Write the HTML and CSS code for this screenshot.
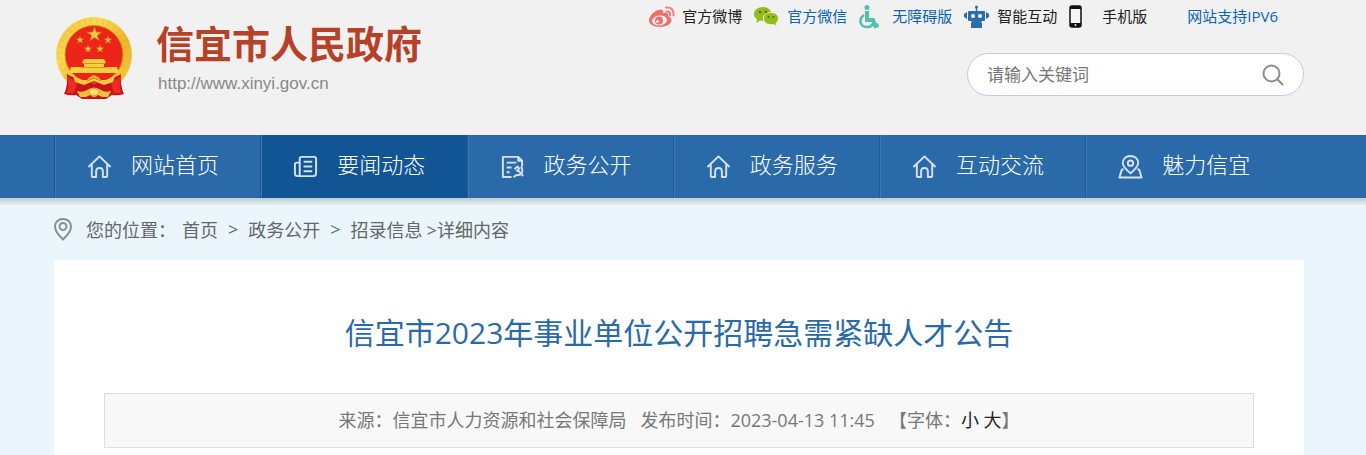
FILE: index.html
```
<!DOCTYPE html>
<html lang="zh-CN">
<head>
    <meta charset="UTF-8">
    <meta name="viewport" content="width=device-width, initial-scale=1">
    <title>信宜市2023年事业单位公开招聘急需紧缺人才公告</title>
    <link rel="stylesheet" href="styles.css">
</head>
<body>
    <!-- 公用图形 -->
    <svg class="defs" width="0" height="0" aria-hidden="true">
        <symbol id="home" viewBox="0 0 26 26">
            <path d="M1.5 13.5 13 2.5l11.500 11M5 11v12q0 1 1 1h3.500v-6q0-3.500 3.500-3.500t3.500 3.500v6H20q1 0 1-1V11"/>
        </symbol>
        <symbol id="star" viewBox="-10 -10 20 20">
            <path d="M0-10 2.400-3.200 9.500-3.100 3.800 1.300 5.900 8.100 0 4-5.900 8.100-3.800 1.300-9.500-3.100-2.400-3.200Z"/>
        </symbol>
    </svg>

    <div class="header">
        <div class="wrap headIn">
            <a class="logo" href="#">
                <svg class="emblem" viewBox="0 0 78 84" aria-hidden="true">
                    <defs>
                        <linearGradient id="gold" x1="0" y1="0" x2="1" y2="1">
                            <stop offset="0" stop-color="#f2b92d"/>
                            <stop offset=".3" stop-color="#fadb55"/>
                            <stop offset=".6" stop-color="#eeb52c"/>
                            <stop offset="1" stop-color="#f6cf45"/>
                        </linearGradient>
                    </defs>
                    <circle cx="38" cy="39" r="38" fill="url(#gold)"/>
                    <circle cx="38" cy="39" r="34" fill="none" stroke="#dfa226" stroke-width="5" stroke-dasharray="2 4" opacity=".2"/>
                    <circle cx="38" cy="38.500" r="29" fill="#ed2418" stroke="#d88d1c"/>
                    <g fill="#f4c747" stroke="#c87a16" stroke-width="1">
                        <use href="#star" x="31" y="11" width="15" height="15"/>
                        <use href="#star" x="20" y="20" width="8" height="8"/>
                        <use href="#star" x="48" y="20" width="8" height="8"/>
                        <use href="#star" x="28" y="29" width="8" height="8"/>
                        <use href="#star" x="40" y="29" width="8" height="8"/>
                    </g>
                    <path fill="#f9cf42" d="M28 43h20l2 4h-2v4h13l2 6H13l2-6h13v-4h-2z"/>
                    <path stroke="#dc8f20" d="M27 47.500h22M25 51.500h26"/>
                    <path fill="#c9141b" d="M11 58q9 6 17 5l10 5 10-5q8 1 17-5-1 12 3 20-6 2-12 1l-6 4H26l-6-4q-6 1-12-1 4-8 3-20z"/>
                    <path fill="#ef2a26" d="m12 61 9 5q-1 8-4 11l-6 0q2-7 1-16zm52 0-9 5q1 8 4 11l6 0q-2-7-1-16z"/>
                    <path fill="#f6ca3d" d="M16 57q7 8 15 7l3-3 4-2 4 2 3 3q8 1 15-7l-3 9-9 3-10-4-10 4-9-3z"/>
                    <path fill="none" stroke="#d08a1e" d="m31 65 7-3 7 3M35 61v3m3-5v4m3-3v4"/>
                    <path fill="#efc23c" d="M21 75q6 2 10-1 7-5 14 0 4 3 10 1l-3 6-6 0-4-2q-4 4-8 0l-4 2-6 0z"/>
                    <ellipse cx="38" cy="76" rx="5" ry="3.500" fill="#fae27a" stroke="#dc9c2c"/>
                </svg>
                <span class="logoText">
                    <span class="siteName">信宜市人民政府</span>
                    <span class="siteUrl">http://www.xinyi.gov.cn</span>
                </span>
            </a>
            <div class="headRight">
                <ul class="topLinks">
                    <li><a href="#">
                        <svg width="26" height="22" viewBox="0 0 26 22" aria-hidden="true">
                            <path fill="#ee6e6c" d="M10 4c3-1 5 0 4 3 4-1 6 0 5 3 8 4 1 11-8 11C4 21 0 18 0 14.500 0 10 6 4 10 4z"/>
                            <ellipse cx="10.500" cy="14.500" rx="7.500" ry="5" fill="#f6f1f1" transform="rotate(-8 10.500 14.500)"/>
                            <circle cx="10" cy="14.500" r="4" fill="#ee6e6c"/>
                            <circle cx="8.500" cy="15.500" r="1.300" fill="#fff"/>
                            <path fill="none" stroke="#ee7e7b" stroke-width="2" stroke-linecap="round" d="M17 1.500q8-1 7.500 8M17.500 5.500q4-.5 3.500 4"/>
                        </svg><span>官方微博</span></a></li>
                    <li><a class="blue" href="#">
                        <svg width="25" height="20" viewBox="0 0 25 20" aria-hidden="true">
                            <path fill="#94bd18" d="M9 0c5 0 8.500 3 8.500 7S14 14 9 14l-3-.5L2.500 16l.5-4C1 11 0 9 0 7c0-4 4-7 9-7z"/>
                            <path fill="#94bd18" stroke="#f1f1f1" d="M17 5.500c4.500 0 7.500 2.700 7.500 6 0 2.200-1 3.700-2.500 4.800l.5 3.200-3-2c-6 1-10-2-10-6s3-6 7.500-6z"/>
                            <g fill="#4b7209"><circle cx="6" cy="5" r="1.300"/><circle cx="12" cy="5" r="1.300"/><circle cx="14.500" cy="10" r="1"/><circle cx="19.500" cy="10" r="1"/></g>
                        </svg><span>官方微信</span></a></li>
                    <li><a class="blue" href="#">
                        <svg width="20" height="24" viewBox="0 0 20 24" fill="none" stroke="#54bfad" stroke-width="2.500" aria-hidden="true">
                            <circle cx="8" cy="2.500" r="2.500" fill="#54bfad" stroke="none"/>
                            <path d="M8 6v9h6l2.500 6 3-1" stroke-width="4"/>
                            <path d="M5 10c-6 4-4 12 3 12 4 0 6-2 7-5"/>
                        </svg><span>无障碍版</span></a></li>
                    <li><a href="#">
                        <svg width="25" height="24" viewBox="0 0 25 24" fill="#2c6dae" aria-hidden="true">
                            <circle cx="12.500" cy="2" r="1.500"/>
                            <path d="M11.800 2h1.400v4H20q1 0 1 1v8q0 1-1 1h-2.500v2H18v5H7v-5h.5v-2H5q-1 0-1-1V7q0-1 1-1h6.800zM0 9l3-2v7l-3-2zm25 0-3-2v7l3-2z"/>
                            <circle cx="9" cy="11" r="2" fill="#fff"/><circle cx="16" cy="11" r="2" fill="#fff"/>
                        </svg><span>智能互动</span></a></li>
                    <li><a href="#">
                        <svg width="13" height="23" viewBox="0 0 13 23" aria-hidden="true">
                            <rect x="1" y="1" width="11" height="21" rx="2" fill="#f4f4f4" stroke="#111" stroke-width="1.500"/>
                            <path fill="#111" d="M1 1h11v3H1zM1 18h11v4H1z"/>
                            <circle cx="6.500" cy="20" r="1" fill="#eee"/>
                        </svg><span>手机版</span></a></li>
                    <li class="ipv6"><a class="blue" href="#">网站支持IPV6</a></li>
                </ul>
                <form class="search">
                    <input type="text" placeholder="请输入关键词" aria-label="请输入关键词">
                    <button type="button" aria-label="搜索">
                        <svg width="22" height="22" viewBox="0 0 22 22" fill="none" stroke="#8c8c8c" stroke-width="2" aria-hidden="true">
                            <circle cx="9.500" cy="9.500" r="8"/><path d="m15 15 6 6"/>
                        </svg>
                    </button>
                </form>
            </div>
        </div>
    </div>

    <div class="nav">
        <ul class="wrap navList">
            <li><a href="#"><svg class="navIcon" aria-hidden="true"><use href="#home"/></svg><span>网站首页</span></a></li>
            <li><a class="on" href="#">
                <svg class="navIcon" viewBox="0 0 26 26" aria-hidden="true">
                    <path d="M7 20V5q0-2 2-2h13q2 0 2 2v15q0 3-3 3H5q-3 0-3-3V11q0-2 2-2h3v12q0 2-2 2M11 8h9M11 13h9M11 18h9"/>
                </svg><span>要闻动态</span></a></li>
            <li><a href="#">
                <svg class="navIcon" viewBox="0 0 26 26" aria-hidden="true">
                    <path d="M12 24H3V3h16l4 4v6M19 3v4h4M7 9h10M7 14h5M7 19h3M15 16l3-3 2 2-3 3M18 16l6 7M22 13q4 9-5 9l-3 2"/>
                </svg><span>政务公开</span></a></li>
            <li><a href="#"><svg class="navIcon" aria-hidden="true"><use href="#home"/></svg><span>政务服务</span></a></li>
            <li><a href="#"><svg class="navIcon" aria-hidden="true"><use href="#home"/></svg><span>互动交流</span></a></li>
            <li><a href="#">
                <svg class="navIcon" viewBox="0 0 26 26" aria-hidden="true">
                    <path d="M13 20Q5 13 5 9.500C5 5 8.500 2 13 2s8 3 8 7.500Q21 13 13 20zM6 16H4L1.500 24.500h23L22 16h-2"/>
                    <circle cx="13" cy="9.500" r="2.800"/>
                </svg><span>魅力信宜</span></a></li>
        </ul>
    </div>

    <div class="main">
        <div class="wrap">
            <div class="position">
                <svg width="18" height="23" viewBox="0 0 18 23" fill="none" stroke="#8a8f92" stroke-width="2" aria-hidden="true">
                    <path d="M9 21.500Q1 14 1 8.500C1 4 4.500 1 9 1s8 3 8 7.500Q17 14 9 21.500z"/>
                    <circle cx="9" cy="8.500" r="3.500"/>
                </svg>
                <span class="label">您的位置：</span>
                <a href="#">首页</a><span class="gt">&gt;</span><a href="#">政务公开</a><span class="gt">&gt;</span><a href="#">招录信息</a>
                <span class="last">&gt;详细内容</span>
            </div>
            <div class="article">
                <h1>信宜市2023年事业单位公开招聘急需紧缺人才公告</h1>
                <div class="info">
                    <span>来源：信宜市人力资源和社会保障局</span>
                    <span>发布时间：2023-04-13 11:45</span>
                    <span>【字体：<button type="button">小</button> <button type="button">大</button>】</span>
                </div>
            </div>
        </div>
    </div>
</body>
</html>
```
FILE: styles.css
```
*{
    margin: 0;
    padding: 0;
    box-sizing: border-box;
}

body{
    font-family: "Open Sans", "Noto Sans CJK SC", sans-serif;
    background-color: #eaf5fc;
    color: #666;
}

ul{
    list-style: none;
}

a{
    color: inherit;
    text-decoration: none;
}

button{
    border: 0;
    background: none;
    font: inherit;
    cursor: pointer;
}

.defs{
    display: block;
}

.header, .nav, .main{
    padding-right: 8px;
}

.wrap{
    max-width: 1250px;
    margin: 0 auto;
}

/*头部*/
.header{
    background-color: #f1f1f1;
}

.headIn{
    display: flex;
    justify-content: space-between;
    min-height: 135px;
}

.logo{
    display: flex;
    gap: 22px;
    padding: 16px 0 0 2px;
}

.emblem{
    width: 78px;
    height: 84px;
}

.logoText{
    display: flex;
    flex-direction: column;
    white-space: nowrap;
}

.siteName{
    font-size: 38px;
    line-height: 54px;
    font-weight: bold;
    color: #b54127;
}

.siteUrl{
    padding-left: 2px;
    font-family: "Liberation Sans", sans-serif;
    font-size: 17px;
    line-height: 28px;
    color: #888;
}

.headRight{
    display: flex;
    flex-direction: column;
    align-items: flex-end;
    gap: 20px;
}

.topLinks{
    display: flex;
    padding-right: 26px;
    font-size: 15px;
    line-height: 33px;
    white-space: nowrap;
    color: #222;
}

.topLinks li{
    width: 105px;
}

.topLinks .ipv6{
    width: auto;
    padding-left: 13px;
}

.topLinks a{
    display: flex;
    align-items: center;
}

.topLinks span{
    margin-left: auto;
    width: 72px;
}

.topLinks .blue{
    color: #0b63b5;
}

.search{
    display: flex;
    align-items: center;
    width: 337px;
    height: 43px;
    padding: 0 19px;
    border: 1px solid #bccce8;
    border-radius: 22px;
    background-color: #fff;
}

.search input{
    flex: 1;
    min-width: 0;
    border: 0;
    outline: none;
    font: 17px "Open Sans", "Noto Sans CJK SC", sans-serif;
}

.search input::placeholder{
    color: #757575;
}

.search button{
    display: flex;
}

/*导航*/
.nav{
    background-color: #2a6aa8;
}

.navList{
    display: flex;
}

.navList li{
    width: 16.5%;
    border-left: 1px solid #215a96;
}

.navList a{
    display: flex;
    align-items: center;
    gap: 19px;
    height: 63px;
    padding-left: 31px;
    border-left: 1px solid #3e79b3;
    font-size: 22px;
    font-weight: 300;
    color: #fff;
    white-space: nowrap;
}

.navList span{
    padding-bottom: 7px;
}

.navList .on{
    background-color: #125595;
}

.navIcon{
    width: 25px;
    height: 25px;
    fill: none;
    stroke: #d5e2ef;
    stroke-width: 2;
    stroke-linejoin: round;
}

/*导航下方的阴影*/
.main{
    background: linear-gradient(#bfc9cf, #eaf5fc) no-repeat;
    background-size: 100% 8px;
}

/*当前位置*/
.position{
    display: flex;
    align-items: center;
    height: 62px;
    font-size: 18px;
    white-space: nowrap;
}

.position .label{
    margin: 0 6px 0 14px;
}

.position .gt{
    margin: 0 10px;
}

.position .last{
    margin-left: 4px;
}

/*正文*/
.article{
    padding: 46px 50px 7px;
    background-color: #fff;
}

.article h1{
    font-size: 30px;
    line-height: 54px;
    font-weight: normal;
    text-align: center;
    color: #2a6aa8;
}

.info{
    display: flex;
    justify-content: center;
    gap: 14px;
    margin-top: 33px;
    border: 1px solid #ddd;
    background-color: #f8f8f8;
    font-size: 18px;
    line-height: 53px;
    color: #777;
}

.info button{
    color: #222;
}
```
